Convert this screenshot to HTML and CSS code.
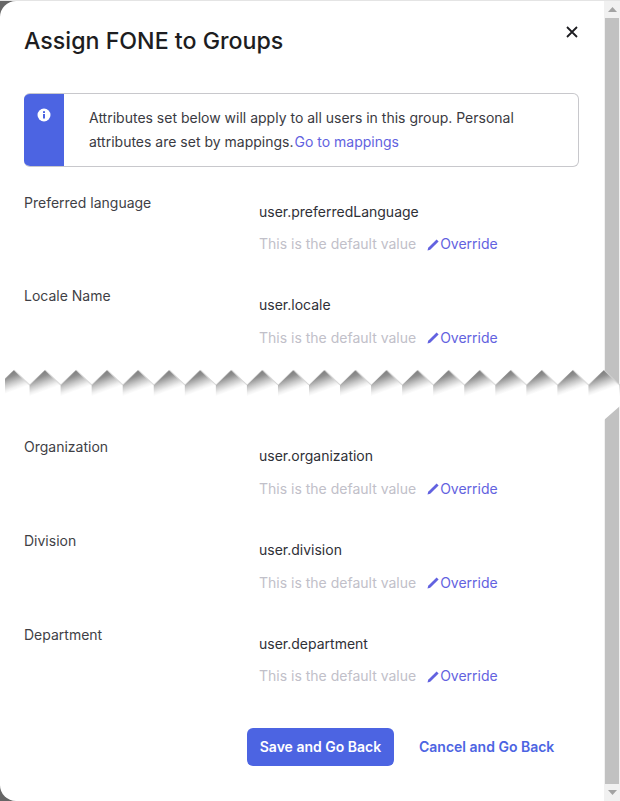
FILE: index.html
```html
<!DOCTYPE html>
<html lang="en">
<head>
  <meta charset="UTF-8">
  <meta name="viewport" content="width=device-width, initial-scale=1.0">
  <title>Assign FONE to Groups</title>
  <link rel="stylesheet" href="styles.css">
</head>
<body>
  <div class="window">
    <div class="modal">
      <div class="modal-header">
        <h1 class="modal-title">Assign FONE to Groups</h1>
        <button class="close-btn" aria-label="Close">
          <svg width="12" height="12" viewBox="0 0 12 12"><path d="M1 1L11 11M11 1L1 11" stroke="#1d1d21" stroke-width="1.8" fill="none"/></svg>
        </button>
      </div>

      <div class="callout">
        <div class="callout-side">
          <svg width="14" height="14" viewBox="0 0 14 14"><circle cx="7" cy="7" r="6.5" fill="#fff"/><rect x="6" y="6" width="2" height="4.5" fill="#4c64e2"/><rect x="6" y="3.2" width="2" height="1.8" fill="#4c64e2"/></svg>
        </div>
        <p class="callout-text">Attributes set below will apply to all users in this group. Personal attributes are set by mappings.<a href="#" class="link callout-link">Go to mappings</a></p>
      </div>

      <div class="attr-list">
        <div class="attr-row">
          <div class="attr-label">Preferred language</div>
          <div class="attr-body">
            <div class="attr-value">user.preferredLanguage</div>
            <div class="attr-hint"><span>This is the default value</span><a href="#" class="link override"><svg class="pen" width="13" height="13" viewBox="0 0 13 13"><path d="M0.5 12.5L1.2 9.8L9.6 1.4L11.6 3.4L3.2 11.8Z" fill="#6262e0"/></svg>Override</a></div>
          </div>
        </div>
        <div class="attr-row">
          <div class="attr-label">Locale Name</div>
          <div class="attr-body">
            <div class="attr-value">user.locale</div>
            <div class="attr-hint"><span>This is the default value</span><a href="#" class="link override"><svg class="pen" width="13" height="13" viewBox="0 0 13 13"><path d="M0.5 12.5L1.2 9.8L9.6 1.4L11.6 3.4L3.2 11.8Z" fill="#6262e0"/></svg>Override</a></div>
          </div>
        </div>
        <div class="attr-row after-tear">
          <div class="attr-label">Organization</div>
          <div class="attr-body">
            <div class="attr-value">user.organization</div>
            <div class="attr-hint"><span>This is the default value</span><a href="#" class="link override"><svg class="pen" width="13" height="13" viewBox="0 0 13 13"><path d="M0.5 12.5L1.2 9.8L9.6 1.4L11.6 3.4L3.2 11.8Z" fill="#6262e0"/></svg>Override</a></div>
          </div>
        </div>
        <div class="attr-row">
          <div class="attr-label">Division</div>
          <div class="attr-body">
            <div class="attr-value">user.division</div>
            <div class="attr-hint"><span>This is the default value</span><a href="#" class="link override"><svg class="pen" width="13" height="13" viewBox="0 0 13 13"><path d="M0.5 12.5L1.2 9.8L9.6 1.4L11.6 3.4L3.2 11.8Z" fill="#6262e0"/></svg>Override</a></div>
          </div>
        </div>
        <div class="attr-row">
          <div class="attr-label">Department</div>
          <div class="attr-body">
            <div class="attr-value">user.department</div>
            <div class="attr-hint"><span>This is the default value</span><a href="#" class="link override"><svg class="pen" width="13" height="13" viewBox="0 0 13 13"><path d="M0.5 12.5L1.2 9.8L9.6 1.4L11.6 3.4L3.2 11.8Z" fill="#6262e0"/></svg>Override</a></div>
          </div>
        </div>
      </div>

      <div class="modal-actions">
        <button class="btn-primary">Save and Go Back</button>
        <button class="btn-text">Cancel and Go Back</button>
      </div>
    </div>

    <div class="scrollbar">
      <div class="scroll-arrow"><svg width="9" height="5" viewBox="0 0 9 5"><path d="M4.5 0L9 5H0Z" fill="#a3a3a3"/></svg></div>
      <div class="scroll-thumb"></div>
      <div class="scroll-arrow"><svg width="9" height="5" viewBox="0 0 9 5"><path d="M0 0H9L4.5 5Z" fill="#a3a3a3"/></svg></div>
    </div>

    <!-- torn edge drawn over the page -->
    <svg class="tear" width="620" height="60" viewBox="0 0 620 60">
      <defs>
        <linearGradient id="tearShade" gradientUnits="userSpaceOnUse" x1="13" y1="5" x2="20" y2="24">
          <stop offset="0" stop-color="#787878"/>
          <stop offset="0.3" stop-color="#909090"/>
          <stop offset="0.6" stop-color="#c8c8c8"/>
          <stop offset="0.85" stop-color="#f0f0f0"/>
          <stop offset="1" stop-color="#ffffff"/>
        </linearGradient>
        <pattern id="tearTeeth" x="-1.5" y="0" width="31.05" height="32" patternUnits="userSpaceOnUse">
          <path d="M0 20L15.5 5L31.05 20V32H0Z" fill="url(#tearShade)"/>
          <path d="M15.5 5L31.05 20" stroke="#d4d4d4" stroke-width="1" fill="none"/>
        </pattern>
      </defs>
      <path d="M0 20H620V41L604 55V60H0Z" fill="#ffffff"/>
      <rect x="5" y="0" width="615" height="32" fill="url(#tearTeeth)"/>
    </svg>
  </div>
</body>
</html>
```

FILE: styles.css
```css
* {
  box-sizing: border-box;
}

html, body {
  margin: 0;
  padding: 0;
}

body {
  width: 620px;
  height: 801px;
  overflow: hidden;
  background-color: #666;
  font-family: Inter, "Noto Sans", sans-serif;
  font-size: 14px;
  color: #2f3037;
}

.window {
  position: relative;
  display: flex;
  height: 801px;
  padding-top: 1px;
  box-shadow: inset 0 1px 0 #e4e4e4;
}

.modal {
  flex: 1;
  background-color: #fff;
  border-radius: 16px 0 0 16px;
  padding: 0 25px 0 24px;
}

.modal-header {
  display: flex;
  justify-content: space-between;
  align-items: flex-start;
  height: 92px;
  padding-top: 25px;
}

.modal-title {
  margin: 0;
  font-size: 23.2px;
  font-weight: 500;
  line-height: 30px;
  color: #1d1d21;
}

.close-btn {
  display: flex;
  padding: 0;
  margin: 0 1px 0 0;
  background: none;
  border: none;
}

.callout {
  display: flex;
  border: 1px solid #c8c8cc;
  border-left: 0;
  border-radius: 6px;
  overflow: hidden;
}

.callout-side {
  flex: 0 0 40px;
  display: flex;
  justify-content: center;
  padding-top: 14px;
  background-color: #4c64e2;
}

.callout-text {
  margin: 0;
  padding: 12px 20px 12px 25px;
  line-height: 24px;
  color: #3a3a42;
}

.link {
  color: #6262e0;
  text-decoration: none;
}

.callout-link {
  margin-left: 1px;
}

.attr-list {
  padding-top: 22.7px;
}

.attr-row {
  display: flex;
  height: 93.6px;
}

.after-tear {
  margin-top: 57.5px;
}

.attr-label {
  flex: 0 0 235px;
  line-height: 26px;
  color: #3f3f46;
}

.attr-value {
  padding-top: 9px;
  line-height: 26px;
  color: #2f3037;
}

.attr-hint {
  display: flex;
  align-items: center;
  gap: 11px;
  margin-top: 6.6px;
  line-height: 26px;
  color: #c1c0c9;
}

.override {
  display: flex;
  align-items: center;
}

.modal-actions {
  display: flex;
  align-items: center;
  gap: 25px;
  margin-top: 12.8px;
  padding-left: 223px;
}

.btn-primary {
  width: 147px;
  height: 38px;
  padding: 0;
  border: none;
  border-radius: 6px;
  background-color: #4c64e2;
  color: #fff;
  font-family: inherit;
  font-size: 14px;
  font-weight: 600;
}

.btn-text {
  padding: 0;
  border: none;
  background: none;
  color: #4c64e2;
  font-family: inherit;
  font-size: 14px;
  font-weight: 600;
}

.scrollbar {
  flex: 0 0 16px;
  display: flex;
  flex-direction: column;
  padding: 0 1px;
  background-color: #f1f1f1;
}

.scroll-arrow {
  flex: 0 0 17px;
  display: flex;
  align-items: center;
  justify-content: center;
}

.scroll-thumb {
  flex: 1;
  background-color: #c1c1c1;
}

.tear {
  position: absolute;
  left: 0;
  top: 365px;
}
```
